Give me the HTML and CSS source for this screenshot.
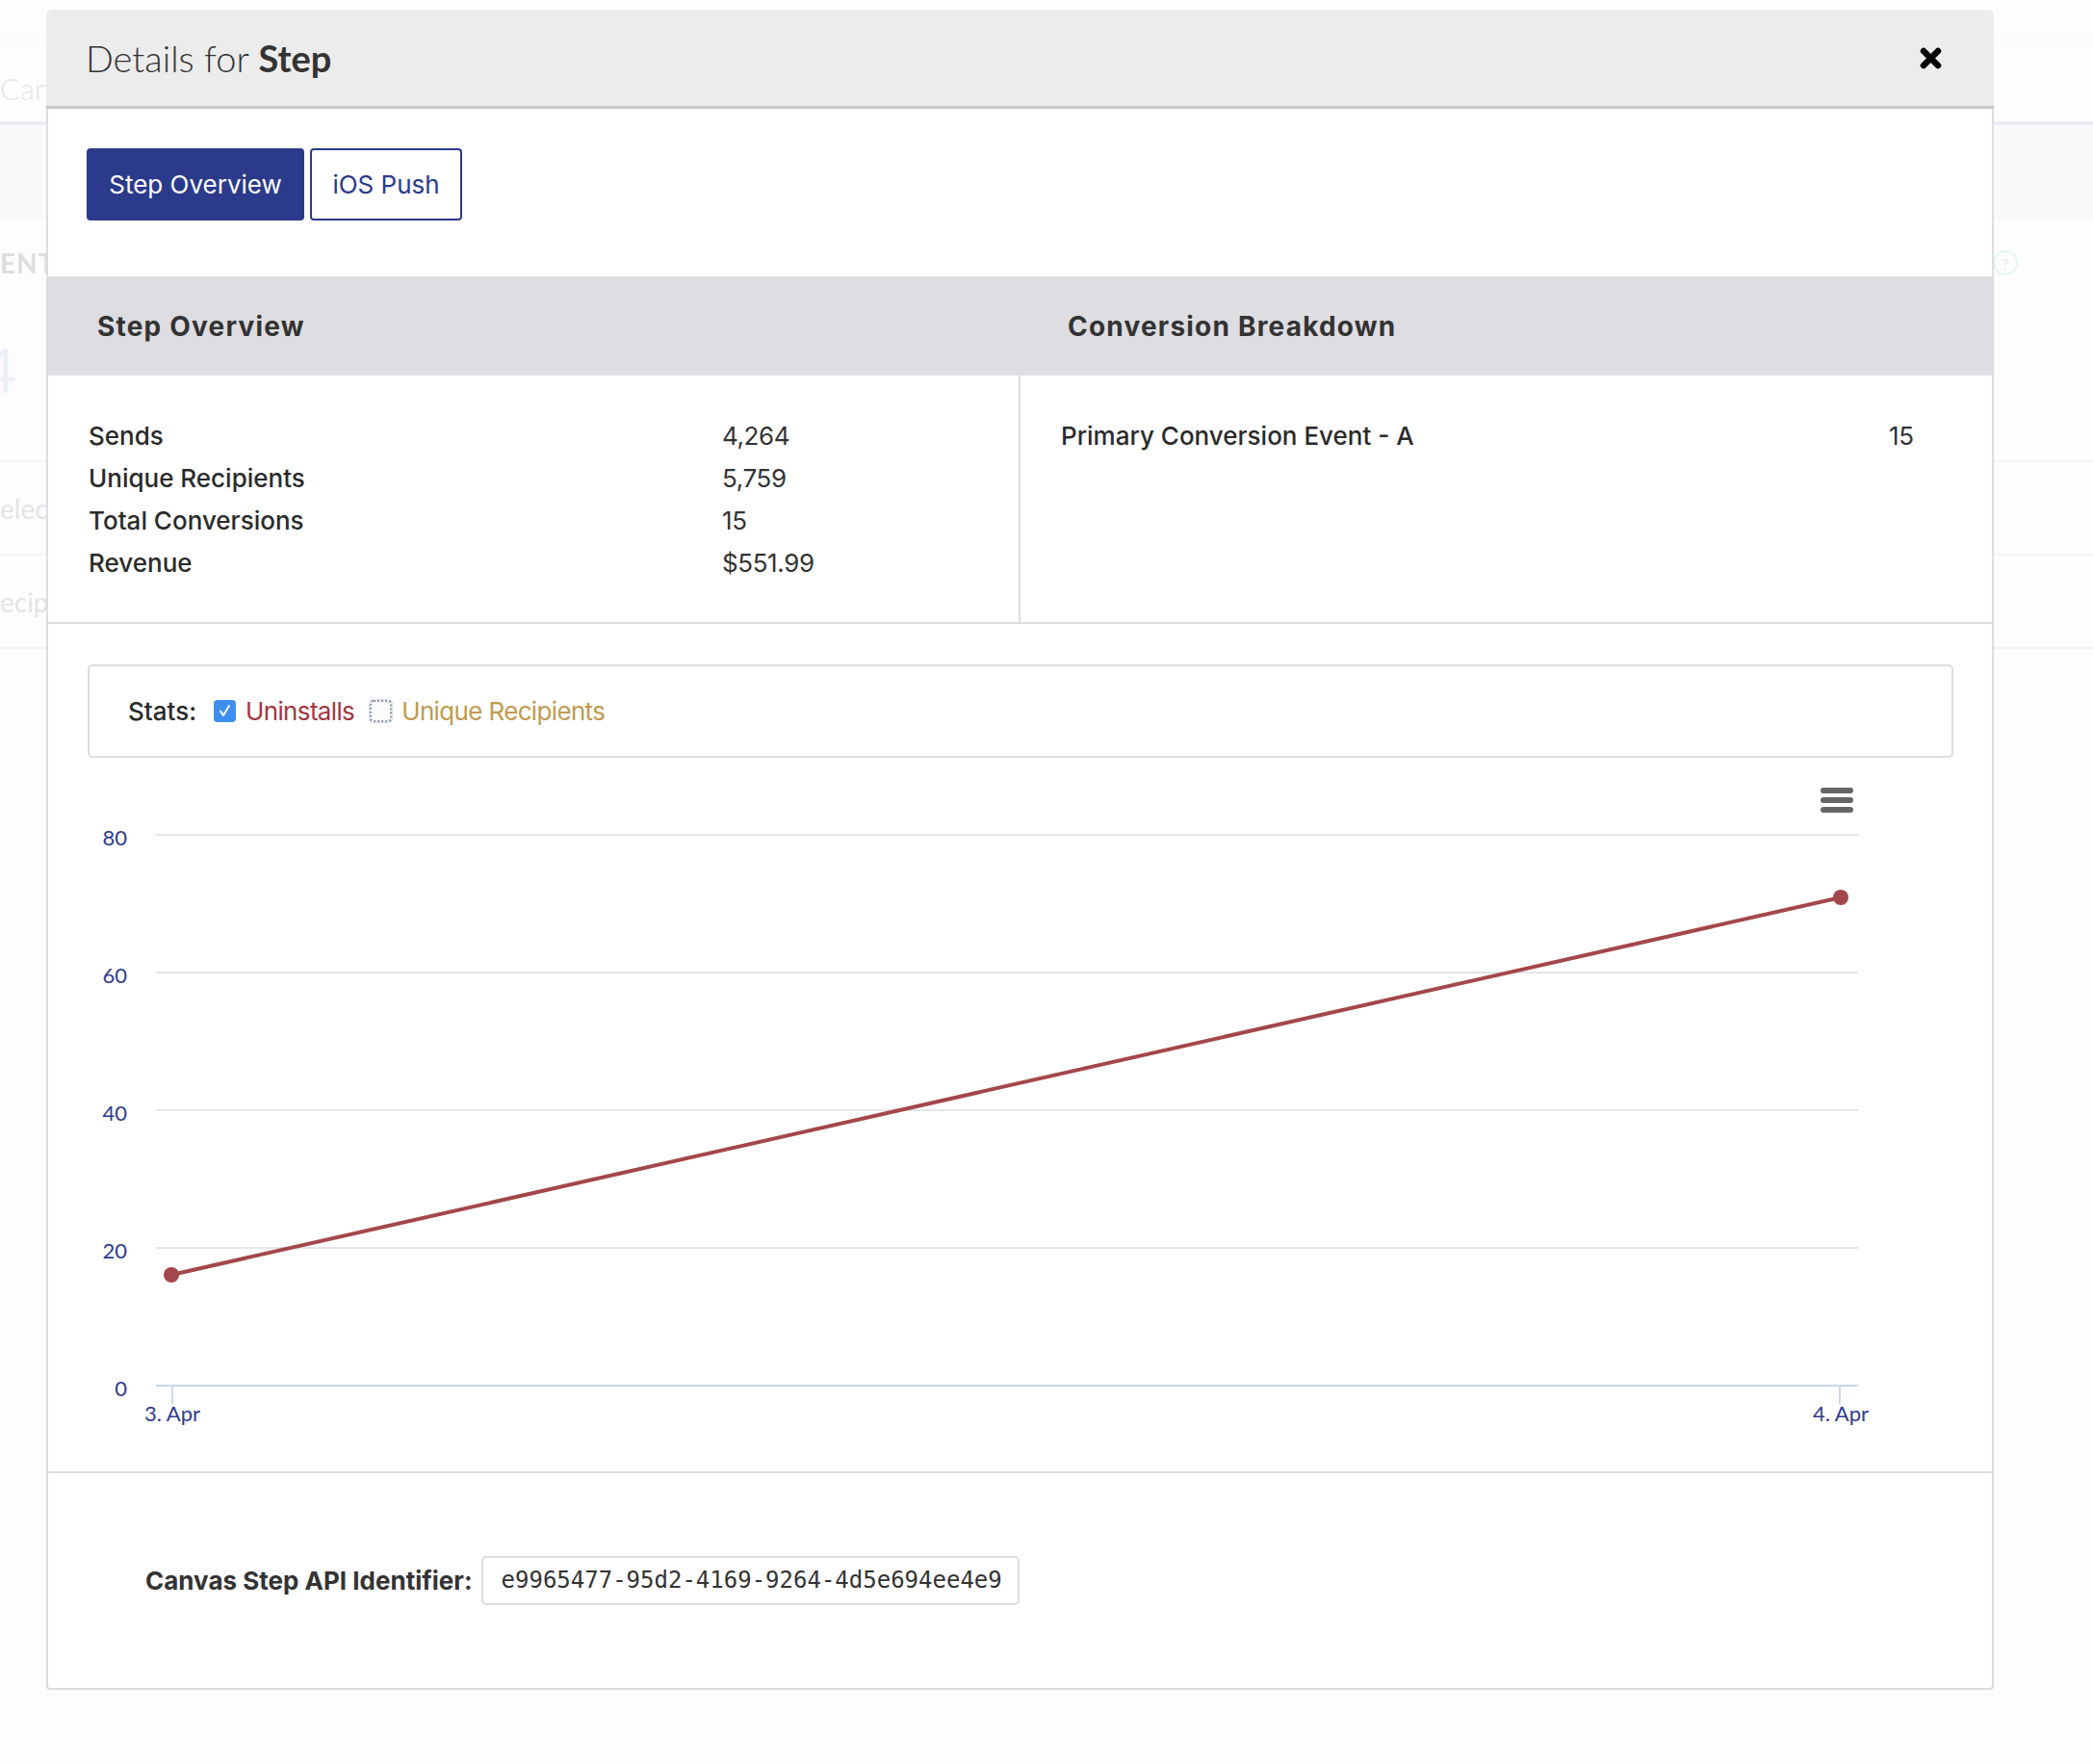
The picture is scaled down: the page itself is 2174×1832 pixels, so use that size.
FILE: index.html
```html
<!DOCTYPE html>
<html lang="en">
<head>
<meta charset="utf-8">
<title>Details for Step</title>
<link rel="stylesheet" href="styles.css">
</head>
<body>
<div class="bgpage">
  <div class="bg-nav"></div>
  <div class="bg-title">Canvas</div>
  <div class="bg-band"></div>
  <div class="bg-heading"><span>ENT</span><span class="bg-help">?</span></div>
  <div class="bg-number">4</div>
  <div class="bg-row">elect</div>
  <div class="bg-row">ecipi</div>
  <div class="bg-row"></div>
</div>

<div class="modal">
  <div class="modal-header">
    <h1 class="modal-title">Details for <strong>Step</strong></h1>
    <button class="close" aria-label="Close">
      <svg width="23" height="23" viewBox="0 0 23 23"><path d="M4 4 L19 19 M19 4 L4 19" stroke="#000" stroke-width="6.5" stroke-linecap="round"/></svg>
    </button>
  </div>
  <div class="modal-body">
    <div class="tabs">
      <button class="tab active">Step Overview</button>
      <button class="tab">iOS Push</button>
    </div>

    <div class="overview">
      <div class="ov-head">Step Overview</div>
      <div class="ov-head">Conversion Breakdown</div>
      <div class="ov-cell">
        <div class="kv"><span class="k">Sends</span><span class="v">4,264</span></div>
        <div class="kv"><span class="k">Unique Recipients</span><span class="v">5,759</span></div>
        <div class="kv"><span class="k">Total Conversions</span><span class="v">15</span></div>
        <div class="kv"><span class="k">Revenue</span><span class="v">$551.99</span></div>
      </div>
      <div class="ov-cell right">
        <div class="kv wide"><span class="k">Primary Conversion Event - A</span><span class="v">15</span></div>
      </div>
    </div>

    <div class="chart-section">
      <div class="stats-box">
        <span class="stats-label">Stats:</span>
        <span class="cb on"><svg width="23" height="23" viewBox="0 0 23 23"><path d="M7 11.5 L10 16 L16 6" fill="none" stroke="#fff" stroke-width="2" stroke-linecap="round" stroke-linejoin="round"/></svg></span>
        <span class="series uninstalls">Uninstalls</span>
        <span class="cb off"></span>
        <span class="series recipients">Unique Recipients</span>
      </div>
      <svg class="chart" width="2019" height="741" viewBox="0 0 2019 741">
        <g stroke="#e4e4ea" stroke-width="2">
          <line x1="112" y1="80" x2="1880" y2="80"/>
          <line x1="112" y1="223" x2="1880" y2="223"/>
          <line x1="112" y1="366" x2="1880" y2="366"/>
          <line x1="112" y1="509" x2="1880" y2="509"/>
        </g>
        <g stroke="#ccd6eb" stroke-width="2">
          <line x1="112" y1="652" x2="1880" y2="652"/>
          <line x1="129" y1="652" x2="129" y2="671"/>
          <line x1="1861" y1="652" x2="1861" y2="671"/>
        </g>
        <g class="axis-label" text-anchor="end">
          <text x="82" y="91">80</text>
          <text x="82" y="234">60</text>
          <text x="82" y="377">40</text>
          <text x="82" y="520">20</text>
          <text x="82" y="663">0</text>
        </g>
        <g class="axis-label" text-anchor="middle">
          <text x="129" y="689">3. Apr</text>
          <text x="1862" y="689">4. Apr</text>
        </g>
        <line x1="128" y1="537" x2="1862" y2="145" stroke="#a4474a" stroke-width="4"/>
        <circle cx="128" cy="537" r="8" fill="#a4474a"/>
        <circle cx="1862" cy="145" r="8" fill="#a4474a"/>
        <g stroke="#666" stroke-width="6" stroke-linecap="round">
          <line x1="1844" y1="34" x2="1872" y2="34"/>
          <line x1="1844" y1="44" x2="1872" y2="44"/>
          <line x1="1844" y1="54" x2="1872" y2="54"/>
        </g>
      </svg>
    </div>

    <div class="footer">
      <span class="api-label">Canvas Step API Identifier:</span>
      <span class="api-box">e9965477-95d2-4169-9264-4d5e694ee4e9</span>
    </div>
  </div>
</div>
</body>
</html>
```

FILE: styles.css
```css
* { box-sizing: border-box; }
html, body { margin: 0; padding: 0; }
body {
  width: 2174px;
  height: 1832px;
  background: #fdfdfd;
  font-family: Inter, Lato, "Liberation Sans", sans-serif;
  color: #333;
  position: relative;
  overflow: hidden;
}

/* faint underlying page */
.bgpage { width: 2174px; font-family: Lato, "Liberation Sans", sans-serif; }
.bg-nav { height: 42px; border-bottom: 1px solid #f4f4f4; }
.bg-title { height: 84px; line-height: 100px; font-size: 31px; font-weight: 300; color: #e6e6e6; }
.bg-band { height: 103px; background: #fafafa; border-top: 4px solid #eceef6; }
.bg-heading {
  height: 88px; display: flex; align-items: center; justify-content: space-between;
  padding-right: 78px; font-size: 28px; font-weight: 700; color: #dedede; letter-spacing: 1px;
}
.bg-help {
  width: 26px; height: 26px; border-radius: 50%; border: 2px solid #e6f6f1; color: #e6f3ef;
  font-size: 16px; display: flex; align-items: center; justify-content: center; letter-spacing: 0;
}
.bg-number { height: 161px; line-height: 134px; font-size: 64px; color: #eef0f8; margin-left: -20px; }
.bg-row {
  height: 97px; border-top: 2px solid #f3f3f3; font-size: 28px; color: #e4e4e4;
  display: flex; align-items: center;
}

/* modal */
.modal {
  position: absolute;
  left: 48px;
  top: 10px;
  width: 2023px;
}
.modal-header {
  height: 103px;
  background: #ececec;
  border-bottom: 3px solid #c8c8c8;
  border-radius: 6px 6px 0 0;
  display: flex;
  align-items: center;
  justify-content: space-between;
  padding: 0 54px 0 41px;
}
.modal-title {
  margin: 0;
  font-family: Lato, "Liberation Sans", sans-serif;
  font-size: 38px;
  font-weight: 300;
  color: #333;
}
.modal-title strong { font-weight: 700; }
.close {
  border: 0; background: none; padding: 0; width: 23px; height: 23px; display: flex;
}

.modal-body {
  background: #fff;
  border: 2px solid #dcdce2;
  border-top: 0;
  border-radius: 0 0 4px 4px;
}

.tabs {
  display: flex;
  gap: 6px;
  padding: 41px 0 58px 40px;
}
.tab {
  height: 75px;
  font-family: inherit;
  font-size: 26px;
  border: 2px solid #2b3a8b;
  border-radius: 4px;
  background: #fff;
  color: #2b3a8b;
  padding: 0;
  width: 158px;
}
.tab.active {
  width: 226px;
  background: #2b3a8b;
  color: #fff;
}

.overview {
  display: grid;
  grid-template-columns: 1008px 1fr;
  border-bottom: 2px solid #dcdce2;
}
.ov-head {
  height: 103px;
  background: #dddde2;
  display: flex;
  align-items: center;
  padding-left: 51px;
  font-size: 28px;
  font-weight: 700;
  letter-spacing: 1.2px;
  color: #333;
}
.ov-cell {
  padding: 40px 0 40px 42px;
}
.ov-cell.right {
  border-left: 2px solid #dcdce2;
  padding-left: 42px;
}
.kv {
  display: flex;
  height: 44px;
  align-items: center;
  font-size: 26px;
}
.k { width: 658px; color: #2a2a2a; font-weight: 500; }
.v { color: #333; letter-spacing: -0.4px; }
.kv.wide .k { width: 860px; }

.chart-section {
  padding-top: 42px;
  border-bottom: 2px solid #dcdce2;
}
.stats-box {
  margin: 0 40px 0 41px;
  height: 97px;
  border: 2px solid #dcdce2;
  border-radius: 5px;
  display: flex;
  align-items: center;
  padding-left: 40px;
  font-size: 26px;
}
.stats-label { color: #2a2a2a; font-weight: 500; margin-right: 18px; }
.cb {
  width: 23px;
  height: 23px;
  border-radius: 4px;
  display: inline-flex;
  flex: none;
}
.cb.on { background: #3d8ef0; }
.cb.off {
  border: 2px dotted #8f96a0;
  box-shadow: 0 0 0 1px #d4dbe8;
  background: #fbfbfb;
}
.series { margin-left: 10px; margin-right: 16px; letter-spacing: -0.65px; }
.uninstalls { color: #a3363f; }
.recipients { color: #c09a4e; }

.chart { display: block; }
.axis-label {
  font-family: Lato, "Liberation Sans", sans-serif;
  font-size: 22px;
  fill: #2e3b8e;
}

.footer {
  height: 223px;
  display: flex;
  align-items: center;
  padding-left: 101px;
}
.api-label {
  font-size: 26px;
  font-weight: 700;
  color: #333;
  margin-right: 9px;
}
.api-box {
  width: 559px;
  height: 51px;
  border: 2px solid #dcdce2;
  border-radius: 5px;
  padding-left: 19px;
  font-family: "DejaVu Sans Mono", "Liberation Mono", monospace;
  font-size: 24px;
  line-height: 47px;
  color: #333;
}
```
